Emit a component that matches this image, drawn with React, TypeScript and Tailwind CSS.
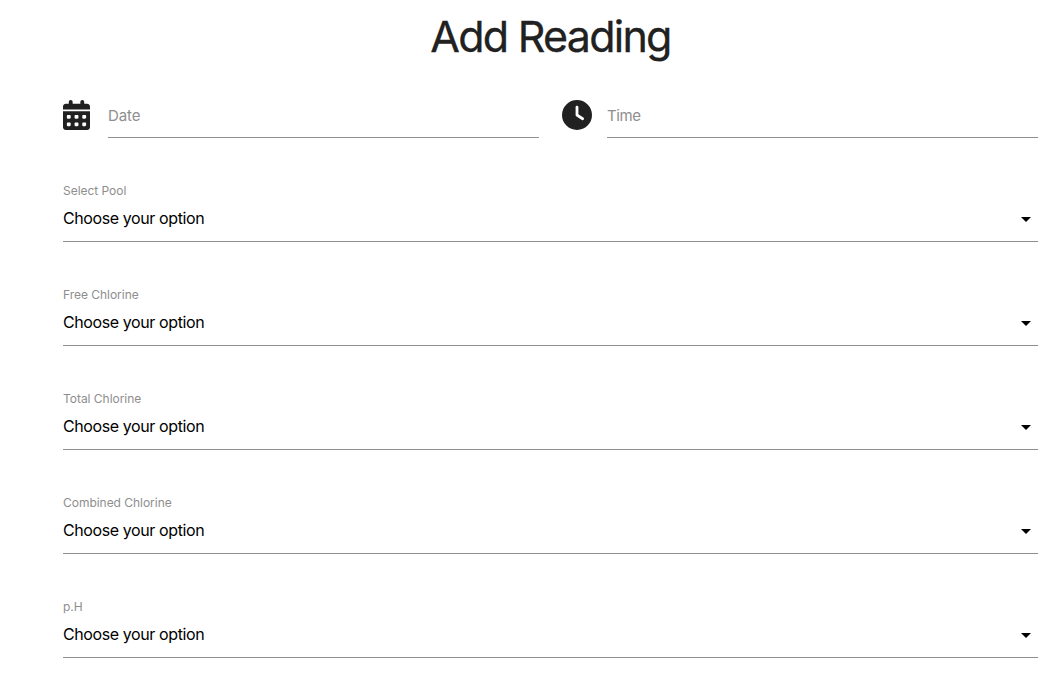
import React from "react";
import { FaCalendarDays, FaClock } from "react-icons/fa6";

const fields = ["Select Pool", "Free Chlorine", "Total Chlorine", "Combined Chlorine", "p.H"];

export default function App() {
  return (
    <main className="h-[698px] overflow-hidden bg-white pl-[63px] pr-[25px] font-['Inter',sans-serif] text-[#212121]">
      <h1 className="h-[74px] pt-[8px] text-center text-[43px] leading-[56px] tracking-[-1.75px] [-webkit-text-stroke:0.3px_#212121]">Add Reading</h1>
      <div className="flex gap-[23px] pt-[18px]">
        <label className="flex h-[46px] flex-1">
          <span className="w-[45px] pt-[8px]"><FaCalendarDays className="h-[30px] w-[27px]" preserveAspectRatio="none" /></span>
          <span className="flex-1 border-b border-[#8f8f8f] pt-[12px] text-[15px] leading-6 tracking-[-0.1px] text-[#8e8e8e]">Date</span>
        </label>
        <label className="flex h-[46px] flex-1">
          <span className="w-[45px] pt-[8px]"><FaClock className="size-[30px]" /></span>
          <span className="flex-1 border-b border-[#8f8f8f] pt-[12px] text-[15px] leading-6 tracking-[-0.4px] text-[#8e8e8e]">Time</span>
        </label>
      </div>
      {fields.map((name) => (
        <div key={name} className="flex h-[104px] flex-col border-b border-[#8f8f8f] pt-[44px]">
          <span className="text-[12px] leading-[18px] tracking-[-0.03px] text-[#8e8e8e]">{name}</span>
          <div className="flex items-center justify-between pr-[7px] pt-[6px] text-[16px] leading-6 tracking-[-0.4px] text-black">
            Choose your option
            <svg className="mt-[2px] h-[5px] w-[10px]" viewBox="0 0 10 5"><path d="M0 0h10L5 5z" /></svg>
          </div>
        </div>
      ))}
    </main>
  );
}
